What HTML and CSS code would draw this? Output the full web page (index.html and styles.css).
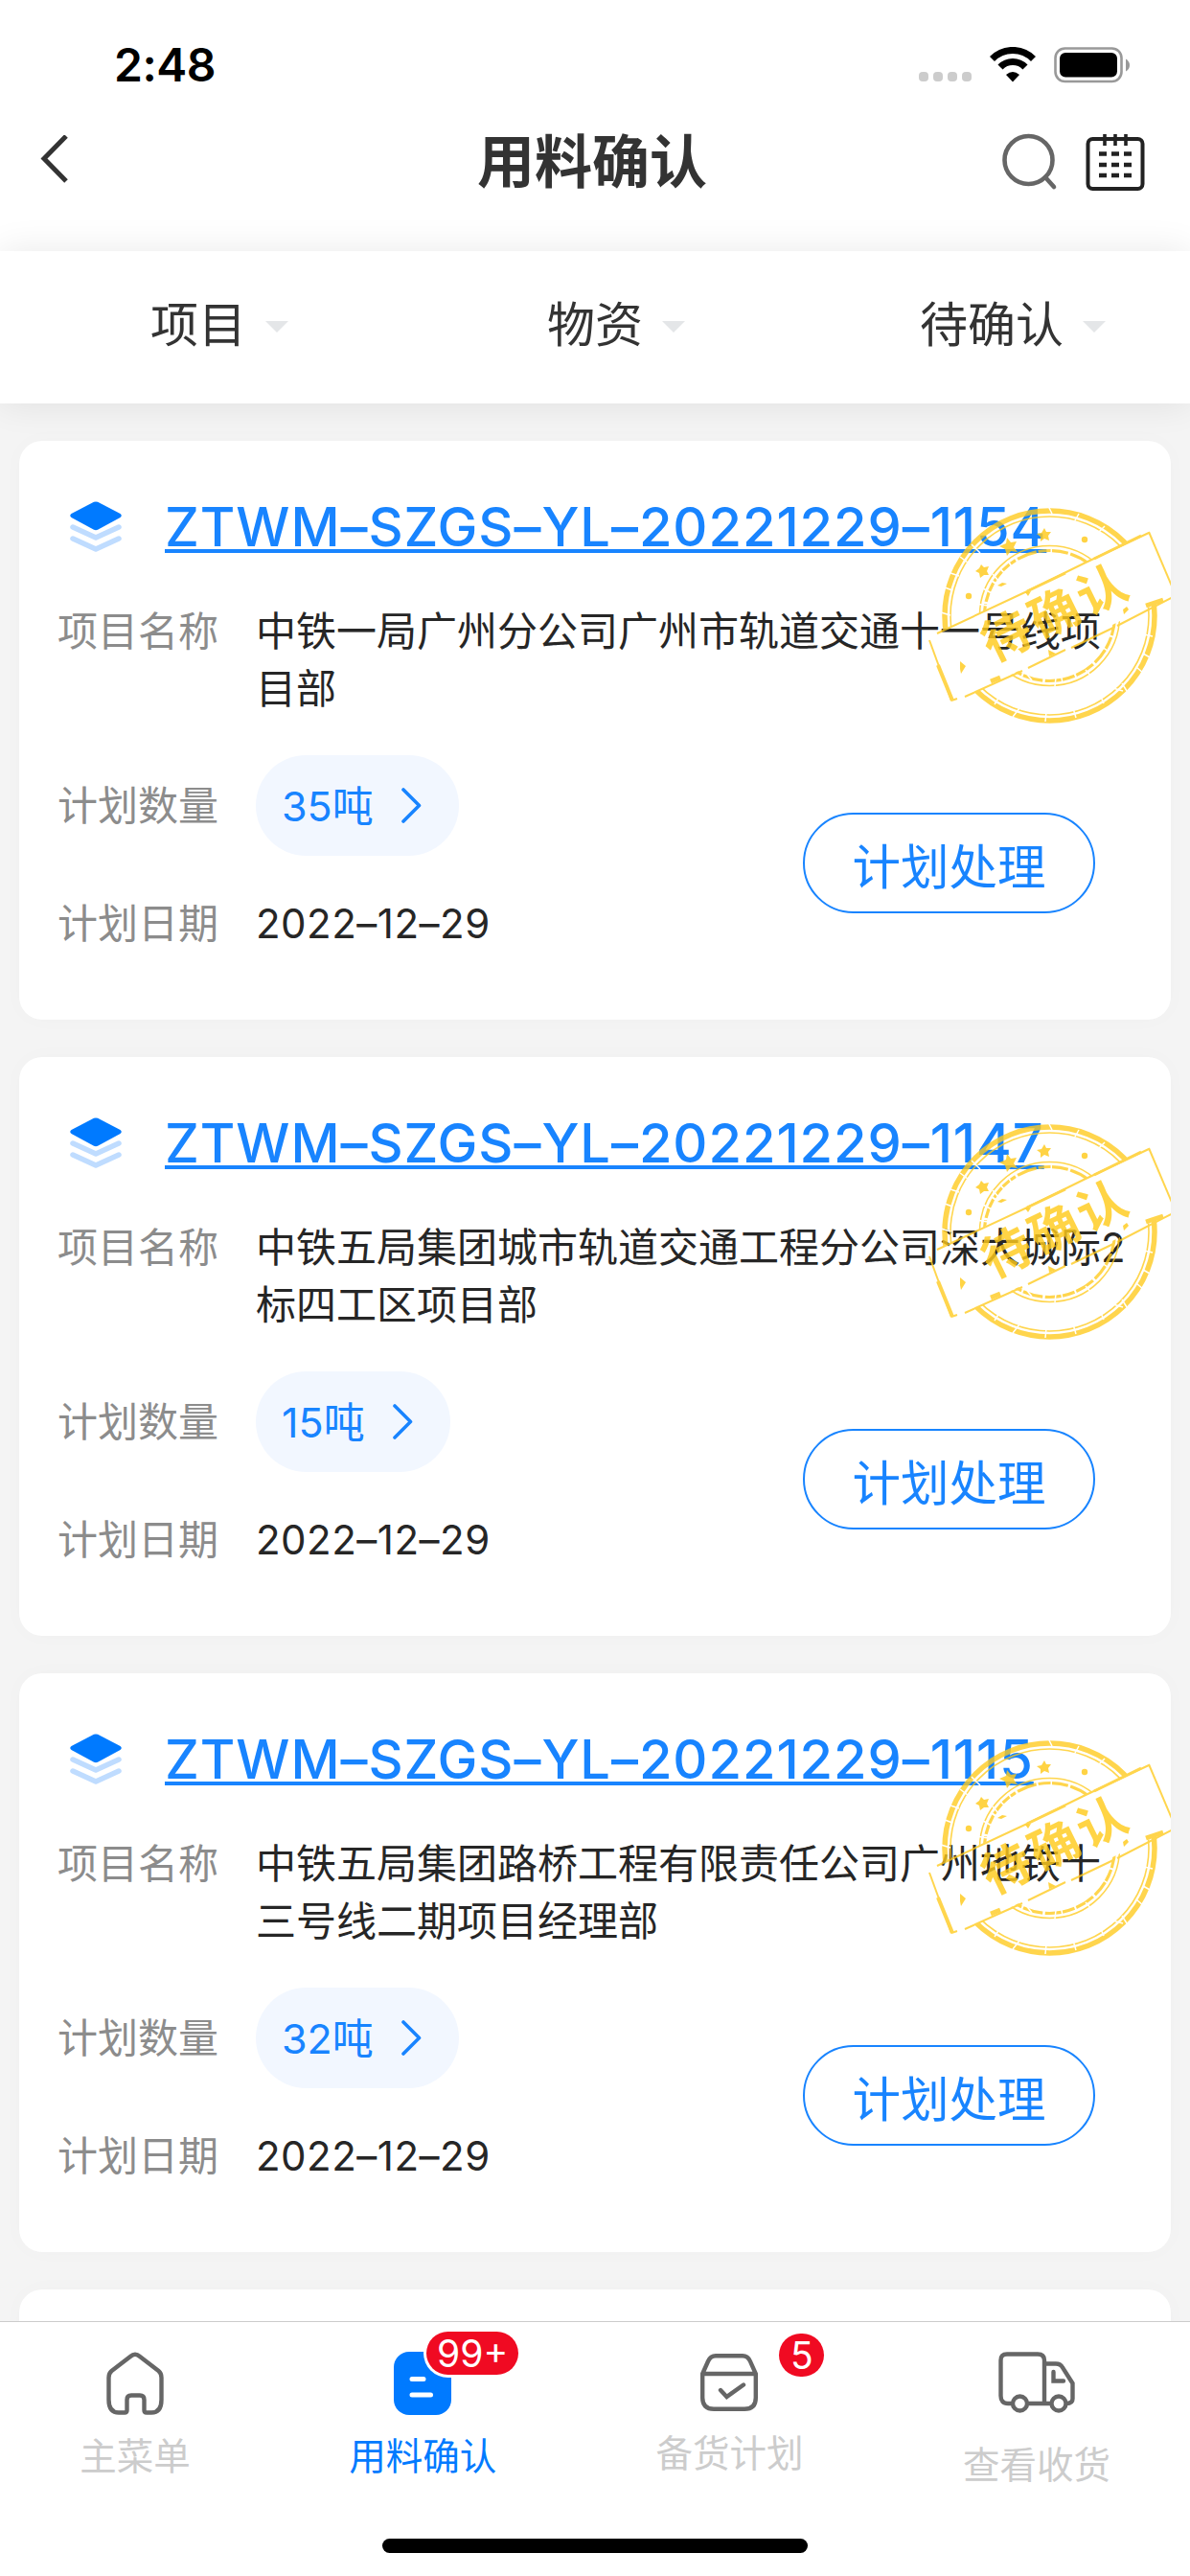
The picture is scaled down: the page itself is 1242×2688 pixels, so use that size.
FILE: index.html
```
<!DOCTYPE html>
<html lang="zh-CN">
<head>
    <meta charset="UTF-8">
    <meta name="viewport" content="width=device-width, initial-scale=1.0">
    <title>用料确认</title>
    <link rel="stylesheet" href="styles.css">
</head>
<body>
    <!-- Shared icons -->
    <svg class="sprite" width="0" height="0">
        <symbol id="icon-layers" viewBox="0 0 54 54">
            <path d="M3 39 L27 50 L51 39 M3 27 L27 38 L51 27" fill="none" stroke="#bfdcff" stroke-width="5.500" stroke-linecap="round" stroke-linejoin="round"/>
            <path d="M25 .8 Q27 0 29 .8 L52.5 13 Q55 15 52.5 17 L29 29.8 Q27 30.6 25 29.8 L1.5 17 Q-1 15 1.5 13 Z" fill="#007aff"/>
        </symbol>
        <symbol id="icon-arrow" viewBox="0 0 21 37">
            <path d="M2 2 L18.5 18.5 L2 35" fill="none" stroke="#1884ff" stroke-width="3.6" stroke-linecap="round" stroke-linejoin="round"/>
        </symbol>
        <symbol id="stamp" viewBox="0 0 260 240">
            <mask id="band">
                <rect width="260" height="240" fill="#fff"/>
                <path d="M7 145 L237 35 L268 98 L32 214 Z" fill="#000"/>
            </mask>
            <g fill="none" stroke="#ffca1c" opacity=".78">
                <g mask="url(#band)">
                    <circle cx="133.5" cy="122.5" r="109.5" stroke-width="5.5"/>
                    <circle cx="133.5" cy="122.5" r="103.5" stroke-width="1.6"/>
                    <circle cx="133.5" cy="122.5" r="68" stroke-width="3.2" stroke-dasharray="21 2 13 1.5 17 2.5"/>
                    <circle cx="133.5" cy="122.5" r="73" stroke-width="1.5"/>
                </g>
                <path d="M16 141 L110 97 L169 68 L237 36" stroke-width="2"/>
                <path d="M110 97 L150 78 M180 63 L229 39" stroke-width="3"/>
                <path d="M237 35 L262 94" stroke-width="2"/>
                <path d="M8 148 L31 211" stroke-width="2"/>
                <path d="M17 174 L32 211" stroke-width="4"/>
                <path d="M31 211 L37 209 M45 207 L105 180 M111 177 L150 158 M156 156 L200 135 M204 133 L262 103" stroke-width="2"/>
                <path d="M72 191 L82 187 M234 112 L252 106" stroke-width="5"/>
            </g>
            <g fill="#ffca1c" opacity=".82">
                <path d="M89 41l4 5 6-1-3 6 4 5-7-1-4 5-2-7-6-3 7-3z"/>
                <path d="M128 31l2 4 5 0-3 4 1 5-5-2-4 3 0-5-4-3 5-1z"/>
                <path d="M62 69l3 3 5-1-2 5 2 4-5 0-4 3-1-5-4-2 4-3z"/>
                <circle cx="170" cy="43" r="3.2"/>
                <circle cx="49" cy="102" r="3.2"/>
                <path d="M79 91l5-3 5 1-6 3zM40 170l6 5-5 8-1-5zM108 98l6-1-3 5zM132 158l8 4-7 3zM210 116l4-3 2 3-5 5z"/>
            </g>
            <!-- worn scratches -->
            <path d="M20 119l10 3M24 93l8 3M30 78l9 3M40 61l8 6M52 48l9 9M132 8l4 8M164 16l-5 9M191 29l-7 7M232 142l9 2M231 162l9 5M224 176l8 7M209 193l5 8M186 205l4 9M158 219l3 10M130 223l-1 10M102 219l-7 9M81 207l-5 8M60 193l-8 8M91 213l6-10M196 197l14 4M57 110l12 2M64 94l9 5M74 79l6 7M90 65l5 8M108 181l7 9M140 187l-1 9M171 179l7 8" fill="none" stroke="#fff" stroke-width="1.5"/>
        </symbol>
    </svg>

    <header class="header">
        <div class="status-bar">
            <span class="time">2:48</span>
            <div class="status-icons">
                <div class="signal"><i></i><i></i><i></i><i></i></div>
                <svg width="48" height="37" viewBox="0 0 48 37">
                    <path d="M2.5 12.5 A30 30 0 0 1 45.5 12.5" fill="none" stroke="#000" stroke-width="7"/>
                    <path d="M11 21 A18 18 0 0 1 37 21" fill="none" stroke="#000" stroke-width="7"/>
                    <path d="M17 29 Q24 23 31 29 L24 36.5 Z"/>
                </svg>
                <svg width="80" height="38" viewBox="0 0 80 38">
                    <rect x="1.5" y="1.5" width="69" height="34.500" rx="10" fill="none" stroke="#999" stroke-width="2.600"/>
                    <rect x="6" y="6" width="60" height="25.500" rx="6"/>
                    <path d="M75 12.500 Q79 15 79 19 Q79 23 75 25.500 Z" fill="#999"/>
                </svg>
            </div>
        </div>
        <div class="nav-bar">
            <svg class="back" width="30" height="50" viewBox="0 0 30 50">
                <path d="M27 1 L4 24.500 L27 48" fill="none" stroke="#333" stroke-width="5"/>
            </svg>
            <h1 class="nav-title">用料确认</h1>
            <div class="nav-actions">
                <svg width="60" height="60" viewBox="0 0 60 60">
                    <circle cx="28.500" cy="28" r="25" fill="none" stroke="#666" stroke-width="4.600"/>
                    <path d="M46 46 L55 56" stroke="#666" stroke-width="4.600" stroke-linecap="round"/>
                </svg>
                <svg width="62" height="60" viewBox="0 0 62 60">
                    <rect x="2.500" y="6" width="57" height="52" rx="5" fill="none" stroke="#222" stroke-width="4"/>
                    <path d="M20 1v12M31 1v12M42 1v12" stroke="#222" stroke-width="3.600"/>
                    <path d="M14 21.500h8M27 21.500h8M40 21.500h8M14 33h8M27 33h8M40 33h8M14 44h8M27 44h8M40 44h8" stroke="#222" stroke-width="4.500"/>
                </svg>
            </div>
        </div>
    </header>

    <div class="filter-bar">
        <div class="filter">项目<span class="caret"></span></div>
        <div class="filter">物资<span class="caret"></span></div>
        <div class="filter">待确认<span class="caret"></span></div>
    </div>

    <main class="list">
        <div class="card">
            <div class="card-title">
                <svg class="layers"><use href="#icon-layers"/></svg>
                <a class="code">ZTWM–SZGS–YL–20221229–1154</a>
            </div>
            <div class="row">
                <span class="label">项目名称</span>
                <span class="value">中铁一局广州分公司广州市轨道交通十一号线项目部</span>
            </div>
            <div class="card-bottom">
                <div class="info">
                    <div class="row">
                        <span class="label">计划数量</span>
                        <span class="amount">35吨<svg class="arrow"><use href="#icon-arrow"/></svg></span>
                    </div>
                    <div class="row">
                        <span class="label">计划日期</span>
                        <span class="value date">2022–12–29</span>
                    </div>
                </div>
                <button class="plan-btn">计划处理</button>
            </div>
            <div class="stamp">
                <span class="stamp-text">待确认</span>
                <svg><use href="#stamp"/></svg>
            </div>
        </div>

        <div class="card">
            <div class="card-title">
                <svg class="layers"><use href="#icon-layers"/></svg>
                <a class="code">ZTWM–SZGS–YL–20221229–1147</a>
            </div>
            <div class="row">
                <span class="label">项目名称</span>
                <span class="value">中铁五局集团城市轨道交通工程分公司深大城际2标四工区项目部</span>
            </div>
            <div class="card-bottom">
                <div class="info">
                    <div class="row">
                        <span class="label">计划数量</span>
                        <span class="amount">15吨<svg class="arrow"><use href="#icon-arrow"/></svg></span>
                    </div>
                    <div class="row">
                        <span class="label">计划日期</span>
                        <span class="value date">2022–12–29</span>
                    </div>
                </div>
                <button class="plan-btn">计划处理</button>
            </div>
            <div class="stamp">
                <span class="stamp-text">待确认</span>
                <svg><use href="#stamp"/></svg>
            </div>
        </div>

        <div class="card">
            <div class="card-title">
                <svg class="layers"><use href="#icon-layers"/></svg>
                <a class="code">ZTWM–SZGS–YL–20221229–1115</a>
            </div>
            <div class="row">
                <span class="label">项目名称</span>
                <span class="value">中铁五局集团路桥工程有限责任公司广州地铁十三号线二期项目经理部</span>
            </div>
            <div class="card-bottom">
                <div class="info">
                    <div class="row">
                        <span class="label">计划数量</span>
                        <span class="amount">32吨<svg class="arrow"><use href="#icon-arrow"/></svg></span>
                    </div>
                    <div class="row">
                        <span class="label">计划日期</span>
                        <span class="value date">2022–12–29</span>
                    </div>
                </div>
                <button class="plan-btn">计划处理</button>
            </div>
            <div class="stamp">
                <span class="stamp-text">待确认</span>
                <svg><use href="#stamp"/></svg>
            </div>
        </div>

        <div class="card"></div>
    </main>

    <footer class="footer">
        <nav class="tabs">
            <div class="tab tab-home">
                <svg width="60" height="66" viewBox="0 0 60 66">
                    <path d="M25 5 Q30 .5 35 5 L54.500 20 Q57.500 22.500 57.500 27 V50 Q57.500 63.500 47 63.500 H42 Q39.500 63.500 39.500 61 V50 Q39.500 45.500 35 45.500 H26 Q21.500 45.500 21.500 50 V61 Q21.500 63.500 19 63.500 H13 Q2.500 63.500 2.500 50 V27 Q2.500 22.500 5.500 20 Z" fill="none" stroke="#666" stroke-width="4.400"/>
                </svg>
                <span class="tab-label">主菜单</span>
            </div>
            <div class="tab tab-confirm active">
                <div class="tab-icon">
                    <svg width="60" height="66" viewBox="0 0 60 66">
                        <rect width="60" height="66" rx="16" fill="#007aff"/>
                        <path d="M19 28.500h12M19 45h19.500" stroke="#fff" stroke-width="5" stroke-linecap="round"/>
                    </svg>
                    <span class="badge badge-wide">99+</span>
                </div>
                <span class="tab-label">用料确认</span>
            </div>
            <div class="tab tab-stock">
                <div class="tab-icon">
                    <svg width="60" height="60" viewBox="0 0 60 60">
                        <path d="M2.200 21 L8 8 Q10.500 2.200 16 2.200 H44 Q49.500 2.200 52 8 L57.800 21 V46 Q57.800 57.800 46 57.800 H14 Q2.200 57.800 2.200 46 Z M2.200 21 H57.800" fill="none" stroke="#666" stroke-width="4.400"/>
                        <path d="M21 38 L27.500 45 L45 32.500" fill="none" stroke="#666" stroke-width="4.400" stroke-linecap="round"/>
                    </svg>
                    <span class="badge">5</span>
                </div>
                <span class="tab-label">备货计划</span>
            </div>
            <div class="tab tab-receive">
                <svg width="80" height="64" viewBox="0 0 80 64">
                    <g fill="none" stroke="#666" stroke-width="4.400">
                        <path d="M14 54 H10 Q2.500 54 2.500 46 V9 Q2.500 2.500 9 2.500 H41 Q48 2.500 48 9 V54 M30 54 H54 M48 12.500 H60 Q65 12.500 67 16.500 L77.500 33 V49 Q77.500 54 71 54"/>
                        <path d="M57.500 21 V30.500 H68" stroke-linecap="round"/>
                        <circle cx="22.500" cy="54" r="7.500"/>
                        <circle cx="63" cy="54" r="7.500"/>
                    </g>
                </svg>
                <span class="tab-label">查看收货</span>
            </div>
        </nav>
        <div class="home-indicator"></div>
    </footer>
</body>
</html>
```

FILE: styles.css
```
* {
    box-sizing: border-box;
}

body {
    margin: 0;
    width: 1242px;
    height: 2688px;
    overflow: hidden;
    display: flex;
    flex-direction: column;
    background: #f4f4f4;
    color: #262626;
    font-family: Inter, "Noto Sans CJK SC", sans-serif;
    font-size: 42px;
    line-height: 60px;
}

svg {
    display: block;
    flex-shrink: 0;
}

.sprite {
    position: absolute;
}

/* Header */
.header {
    height: 262px;
    background: #fff;
}

.status-bar {
    display: flex;
    justify-content: space-between;
    height: 132px;
    padding: 38px 62px 0 119px;
}

.time {
    color: #000;
    font-size: 48px;
    font-weight: 600;
    letter-spacing: -0.5px;
}

.status-icons {
    display: flex;
    padding-top: 11px;
}

.status-icons svg {
    margin-left: 19px;
}

.signal {
    display: flex;
    gap: 5px;
    padding-top: 26px;
}

.signal i {
    width: 10px;
    height: 10px;
    border-radius: 4px;
    background: #ccc;
}

.nav-bar {
    display: flex;
    align-items: center;
    justify-content: space-between;
    height: 74px;
    padding: 0 47px 0 42px;
}

.nav-title {
    margin: 0 0 0 119px;
    color: #333;
    font-size: 60px;
    font-weight: 700;
}

.back {
    margin-top: -6px;
}

.nav-actions {
    display: flex;
    gap: 28px;
}

/* Filters */
.filter-bar {
    position: relative;
    z-index: 1;
    display: flex;
    height: 159px;
    background: #fff;
    box-shadow: 0 0 36px rgba(0, 0, 0, 0.09);
}

.filter {
    flex: 1;
    display: flex;
    align-items: center;
    justify-content: center;
    padding: 0 0 6px 44px;
    color: #333;
    font-size: 50px;
}

.caret {
    margin: 4px 0 0 20px;
    border: 12px solid transparent;
    border-top-color: #e4e6e8;
    border-bottom: 0;
}

/* Cards */
.list {
    flex: 1;
    display: flex;
    flex-direction: column;
    gap: 39px;
    padding: 39px 20px 0;
    overflow: hidden;
}

.card {
    position: relative;
    flex-shrink: 0;
    display: flex;
    flex-direction: column;
    gap: 39px;
    height: 604px;
    padding: 50px 37px 0 40px;
    border-radius: 24px;
    background: #fff;
    box-shadow: 0 0 24px rgba(0, 30, 20, 0.02);
    overflow: hidden;
}

.card-title {
    display: flex;
    align-items: center;
    height: 80px;
    padding-left: 13px;
}

.layers {
    width: 54px;
    height: 54px;
}

.code {
    margin-left: 45px;
    color: #1884ff;
    font-size: 56px;
    font-weight: 500;
    letter-spacing: 0.95px;
    white-space: nowrap;
    text-decoration: underline;
    text-decoration-thickness: 4px;
    text-underline-offset: 3px;
    text-decoration-skip-ink: none;
}

.row {
    display: flex;
}

.label {
    width: 207px;
    flex-shrink: 0;
    color: #8c8c8c;
}

.value {
    flex: 1;
}

.date {
    letter-spacing: 0.5px;
}

.card-bottom {
    display: flex;
    justify-content: space-between;
    align-items: flex-start;
    padding-right: 42px;
}

.info {
    display: flex;
    flex-direction: column;
    gap: 41px;
}

.info .row {
    align-items: center;
}

.amount {
    display: flex;
    align-items: center;
    height: 105px;
    padding: 0 39px 0 27px;
    border-radius: 53px;
    background: #f2f7ff;
    color: #1884ff;
    font-size: 43px;
}

.arrow {
    width: 21px;
    height: 37px;
    margin-left: 29px;
}

.plan-btn {
    width: 305px;
    height: 105px;
    margin-top: 60px;
    padding: 0;
    border: 2px solid #1884ff;
    border-radius: 53px;
    background: #fff;
    color: #1884ff;
    font-family: inherit;
    font-size: 50.5px;
}

/* Status stamp over the card corner */
.stamp {
    position: absolute;
    top: 60px;
    right: 0;
    display: flex;
    align-items: center;
    justify-content: center;
    width: 260px;
    height: 240px;
}

.stamp svg {
    position: absolute;
    top: 0;
    left: 0;
    width: 260px;
    height: 240px;
}

.stamp-text {
    padding: 8px 0 0 20px;
    color: rgba(255, 202, 28, 0.82);
    font-size: 51px;
    font-weight: 700;
    letter-spacing: 4px;
    white-space: nowrap;
    transform: rotate(-26deg);
}

/* Bottom tabs */
.footer {
    display: flex;
    flex-direction: column;
    justify-content: space-between;
    height: 266px;
    padding-bottom: 24px;
    border-top: 1px solid #ccc;
    background: #fff;
}

.tabs {
    display: flex;
}

.tab {
    display: flex;
    flex-direction: column;
    align-items: center;
    width: 320px;
    padding-top: 31px;
    color: #ccc;
    font-size: 38.5px;
}

.tab-home {
    width: 282px;
}

.tab-confirm {
    width: 319px;
}

.tab-stock {
    width: 322px;
    padding-top: 33px;
}

.tab-label {
    margin-top: 13px;
}

.tab-stock .tab-label {
    margin-top: 14px;
}

.tab-receive .tab-label {
    margin-top: 24px;
}

.active {
    color: #007aff;
}

.tab-icon {
    position: relative;
}

.badge {
    position: absolute;
    left: 82px;
    top: -21px;
    width: 47px;
    height: 45px;
    border-radius: 23px;
    background: #f00a22;
    color: #fff;
    font-size: 39px;
    line-height: 45px;
    text-align: center;
}

.badge-wide {
    left: 34px;
    width: 96px;
    box-shadow: 0 0 0 3px #fff;
}

.home-indicator {
    width: 444px;
    height: 15px;
    margin: 0 auto;
    border-radius: 8px;
    background: #000;
}
```
